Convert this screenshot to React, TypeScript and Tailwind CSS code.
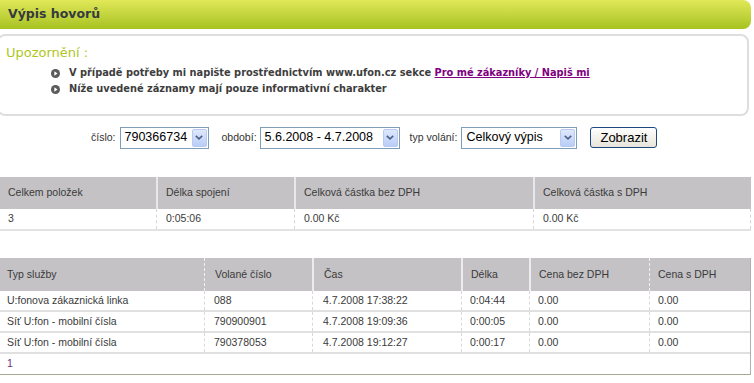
import React from "react";

function Bullet() {
  return (
    <svg width="9" height="9" viewBox="0 0 9 9" className="shrink-0">
      <circle cx="4.5" cy="4.5" r="4.5" fill="#5a5a5a" />
      <path d="M3.3 2.3 L6.6 4.5 L3.3 6.7 Z" fill="#ffffff" />
    </svg>
  );
}

function Select({ value, width }: { value: string; width: string }) {
  return (
    <div className={`${width} h-[22px] border border-[#7f9db9] bg-white flex items-center justify-between pl-[4px] pr-[1px]`}>
      <span className="text-[12.5px] text-black font-['Liberation_Sans',Arial,sans-serif] leading-none whitespace-nowrap">{value}</span>
      <div className="w-[15px] h-[18px] rounded-[2px] border border-[#b8c9f2] bg-linear-to-b from-[#dfe8fd] to-[#b9cdf7] flex items-center justify-center">
        <svg width="8" height="5" viewBox="0 0 8 5">
          <path d="M0.8 0.8 L4 3.8 L7.2 0.8" stroke="#4d6185" strokeWidth="1.6" fill="none" />
        </svg>
      </div>
    </div>
  );
}

export default function App() {
  const rows = [
    ["U:fonova zákaznická linka", "088", "4.7.2008 17:38:22", "0:04:44", "0.00", "0.00"],
    ["Síť U:fon - mobilní čísla", "790900901", "4.7.2008 19:09:36", "0:00:05", "0.00", "0.00"],
    ["Síť U:fon - mobilní čísla", "790378053", "4.7.2008 19:12:27", "0:00:17", "0.00", "0.00"],
  ];
  return (
    <div className="w-[754px] h-[383px] bg-white overflow-hidden font-['Liberation_Sans',Arial,sans-serif] text-[#333]">
      {/* Title bar */}
      <div className="w-[751px] h-[29px] rounded-r-[8px] bg-linear-to-b from-[#e1e857] to-[#a7c21f] flex items-center pl-[8px]">
        <span className="font-['DejaVu_Sans',sans-serif] font-bold text-[12.5px] text-[#363a3f] leading-none">Výpis hovorů</span>
      </div>

      {/* Notice box */}
      <div className="mt-[5px] ml-[-3px] w-[752px] h-[82px] border-2 border-[#dedede] rounded-[8px] pl-[7px] pt-[9px]">
        <div className="font-['DejaVu_Sans',sans-serif] text-[13px] leading-[16px] text-[#afc61c]">Upozornění :</div>
        <div className="mt-[4px] pl-[45px] flex flex-col font-['DejaVu_Sans_Condensed','DejaVu_Sans',sans-serif]">
          <div className="h-[16px] flex items-center gap-[9px] text-[10.9px] font-bold text-[#3d3d3d]">
            <Bullet />
            <span>
              V případě potřeby mi napište prostřednictvím www.ufon.cz sekce{" "}
              <span className="text-[#800080] underline">Pro mé zákazníky / Napiš mi</span>
            </span>
          </div>
          <div className="h-[16px] flex items-center gap-[9px] text-[10.9px] font-bold text-[#3d3d3d]">
            <Bullet />
            <span>Níže uvedené záznamy mají pouze informativní charakter</span>
          </div>
        </div>
      </div>

      {/* Filter row */}
      <div className="mt-[10px] h-[23px] flex items-center pl-[91px]">
        <span className="text-[10.5px] text-[#333] mr-[4px]">číslo:</span>
        <Select value="790366734" width="w-[89px]" />
        <span className="text-[10.5px] text-[#333] ml-[13px] mr-[3px]">období:</span>
        <Select value="5.6.2008 - 4.7.2008" width="w-[140px]" />
        <span className="text-[10.5px] text-[#333] ml-[10px] mr-[4px]">typ volání:</span>
        <Select value="Celkový výpis" width="w-[116px]" />
        <button className="ml-[13px] w-[67px] h-[21px] border border-[#1c4a80] rounded-[3px] bg-linear-to-b from-[#ffffff] to-[#e6e4da] text-[13px] text-black leading-none flex items-center justify-center">
          Zobrazit
        </button>
      </div>

      {/* Summary table */}
      <div className="mt-[28px] w-[751px] text-[10.5px]">
        <div className="grid grid-cols-[156px_138px_239px_218px] h-[32px] bg-[#c4c2c5] text-[#3a3a3a]">
          <div className="flex items-center pl-[8px]">Celkem položek</div>
          <div className="flex items-center pl-[8px] border-l-2 border-[#e8e8e8]">Délka spojení</div>
          <div className="flex items-center pl-[8px] border-l-2 border-[#e8e8e8]">Celková částka bez DPH</div>
          <div className="flex items-center pl-[8px] border-l-2 border-[#e8e8e8]">Celková částka s DPH</div>
        </div>
        <div className="grid grid-cols-[156px_138px_239px_218px] h-[22px] border-b-2 border-[#e2e2e2] text-[#3a3a3a]">
          <div className="flex items-center pl-[8px]">3</div>
          <div className="flex items-center pl-[9px] border-l border-dashed border-[#d6d6d6]">0:05:06</div>
          <div className="flex items-center pl-[9px] border-l border-dashed border-[#d6d6d6]">0.00 Kč</div>
          <div className="flex items-center pl-[9px] border-l border-r border-dashed border-[#d6d6d6]">0.00 Kč</div>
        </div>
      </div>

      {/* Calls table */}
      <div className="mt-[27px] w-[751px] text-[10.5px] border-r border-b border-r-[#b0b0b0] border-b-[#a9a897]">
        <div className="grid grid-cols-[204px_108px_149px_68px_120px_101px] h-[33px] bg-[#c4c2c5] text-[#3a3a3a]">
          <div className="flex items-center pl-[7px]">Typ služby</div>
          <div className="flex items-center pl-[10px] border-l border-dashed border-[#f0f0f0]">Volané číslo</div>
          <div className="flex items-center pl-[10px] border-l-2 border-[#ececec]">Čas</div>
          <div className="flex items-center pl-[8px] border-l-2 border-[#ececec]">Délka</div>
          <div className="flex items-center pl-[8px] border-l-2 border-[#ececec]">Cena bez DPH</div>
          <div className="flex items-center pl-[8px] border-l border-dashed border-[#f0f0f0]">Cena s DPH</div>
        </div>
        {rows.map((r, i) => (
          <div key={i} className="grid grid-cols-[204px_108px_149px_68px_120px_101px] h-[21px] border-b-2 border-[#e0e0e0] text-[#3a3a3a]">
            <div className="flex items-center pl-[7px]">{r[0]}</div>
            <div className="flex items-center pl-[9px] border-l border-dashed border-[#d8d8d8]">{r[1]}</div>
            <div className="flex items-center pl-[10px] border-l border-dashed border-[#d8d8d8]">{r[2]}</div>
            <div className="flex items-center pl-[8px] border-l border-dashed border-[#d8d8d8]">{r[3]}</div>
            <div className="flex items-center pl-[8px] border-l border-dashed border-[#d8d8d8]">{r[4]}</div>
            <div className="flex items-center pl-[8px] border-l border-dashed border-[#d8d8d8]">{r[5]}</div>
          </div>
        ))}
        <div className="h-[20px] flex items-center pl-[7px] text-[#6a2f8a]">1</div>
      </div>
    </div>
  );
}
